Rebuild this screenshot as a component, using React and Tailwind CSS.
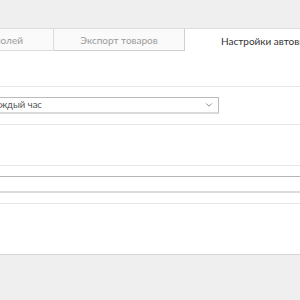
import React from 'react';
import { ChevronDown } from 'lucide-react';

export default function App() {
  return (
    <div className="w-[300px] h-[300px] overflow-hidden bg-[#efefef] font-['Lato',sans-serif]">
      <div className="h-[28px]" />

      {/* Tabs */}
      <div className="flex h-[23px] border-t border-[#dddddd] text-[10px] leading-none">
        <div className="w-[54px] shrink-0 flex items-center justify-end pr-[30px] pt-[1px] overflow-hidden whitespace-nowrap bg-[#fafafa] text-[#9a9a9a] border-r border-b border-[#dddddd]">
          Настройка полей
        </div>
        <div className="w-[131px] shrink-0 flex items-center justify-center pt-[1px] whitespace-nowrap bg-[#fafafa] text-[#9a9a9a] border-r border-b border-[#d0d0d0]">
          Экспорт товаров
        </div>
        <div className="flex-1 flex items-center pl-[36px] pt-[1px] whitespace-nowrap overflow-hidden bg-white text-[#333333]">
          Настройки автовыгрузки
        </div>
      </div>

      {/* Content */}
      <div className="bg-white h-[204px] border-b border-[#d5d5d5]">
        <div className="h-[36px] border-b border-[#e6e6e6]" />
        <div className="h-[38px] border-b border-[#e6e6e6] pt-[10px]">
          <div className="w-[219px] h-[17px] flex items-center justify-between border-t border-r border-[#bbbbbb] border-b-2 border-b-[#dadada] pr-[4px]">
            <span className="-ml-[10px] text-[9.5px] text-[#555555] whitespace-nowrap">каждый час</span>
            <ChevronDown className="w-[10px] h-[10px] text-[#777777]" strokeWidth={2} />
          </div>
        </div>
        <div className="h-[41px] border-b border-[#e6e6e6]" />
        <div className="h-[38px] border-b border-[#e6e6e6] pt-[10px]">
          <div className="h-[17px] border-t border-[#b5b5b5] border-b-2 border-b-[#dcdcdc]" />
        </div>
      </div>
    </div>
  );
}
